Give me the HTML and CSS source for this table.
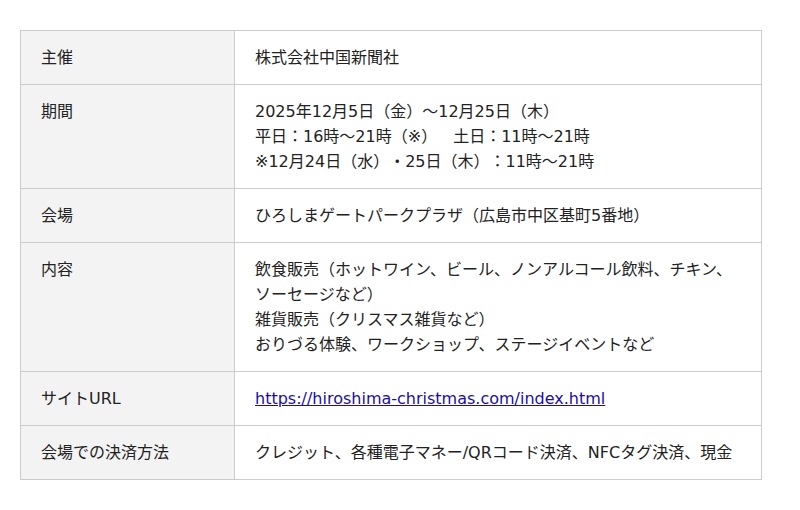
FILE: index.html
```html
<!DOCTYPE html>
<html lang="ja">
<head>
<meta charset="utf-8">
<link rel="stylesheet" href="styles.css">
</head>
<body>
<table class="info">
  <tr><th>主催</th><td>株式会社中国新聞社</td></tr>
  <tr><th>期間</th><td>2025年12月5日（金）〜12月25日（木）<br>平日：16時〜21時（※）　土日：11時〜21時<br>※12月24日（水）・25日（木）：11時〜21時</td></tr>
  <tr><th>会場</th><td>ひろしまゲートパークプラザ（広島市中区基町5番地）</td></tr>
  <tr><th>内容</th><td>飲食販売（ホットワイン、ビール、ノンアルコール飲料、チキン、ソーセージなど）<br>雑貨販売（クリスマス雑貨など）<br>おりづる体験、ワークショップ、ステージイベントなど</td></tr>
  <tr><th>サイトURL</th><td><a href="#">https://hiroshima-christmas.com/index.html</a></td></tr>
  <tr><th>会場での決済方法</th><td>クレジット、各種電子マネー/QRコード決済、NFCタグ決済、現金</td></tr>
</table>
</body>
</html>
```
FILE: styles.css
```css
html, body {
  margin: 0;
  background: #fff;
}
body {
  padding: 30px 20px;
  font-family: "DejaVu Sans", "Noto Sans CJK JP", sans-serif;
  font-size: 16px;
  line-height: 25px;
  color: #222;
  text-spacing-trim: space-all;
}
.info {
  width: 742px;
  border-collapse: collapse;
  table-layout: fixed;
}
.info th, .info td {
  border: 1px solid #ccc;
  padding: 14px 20px;
  text-align: left;
  vertical-align: top;
  font-weight: normal;
}
.info th {
  width: 173px;
  background: #f3f3f3;
}
.info a {
  color: #1a0dab;
}
```
